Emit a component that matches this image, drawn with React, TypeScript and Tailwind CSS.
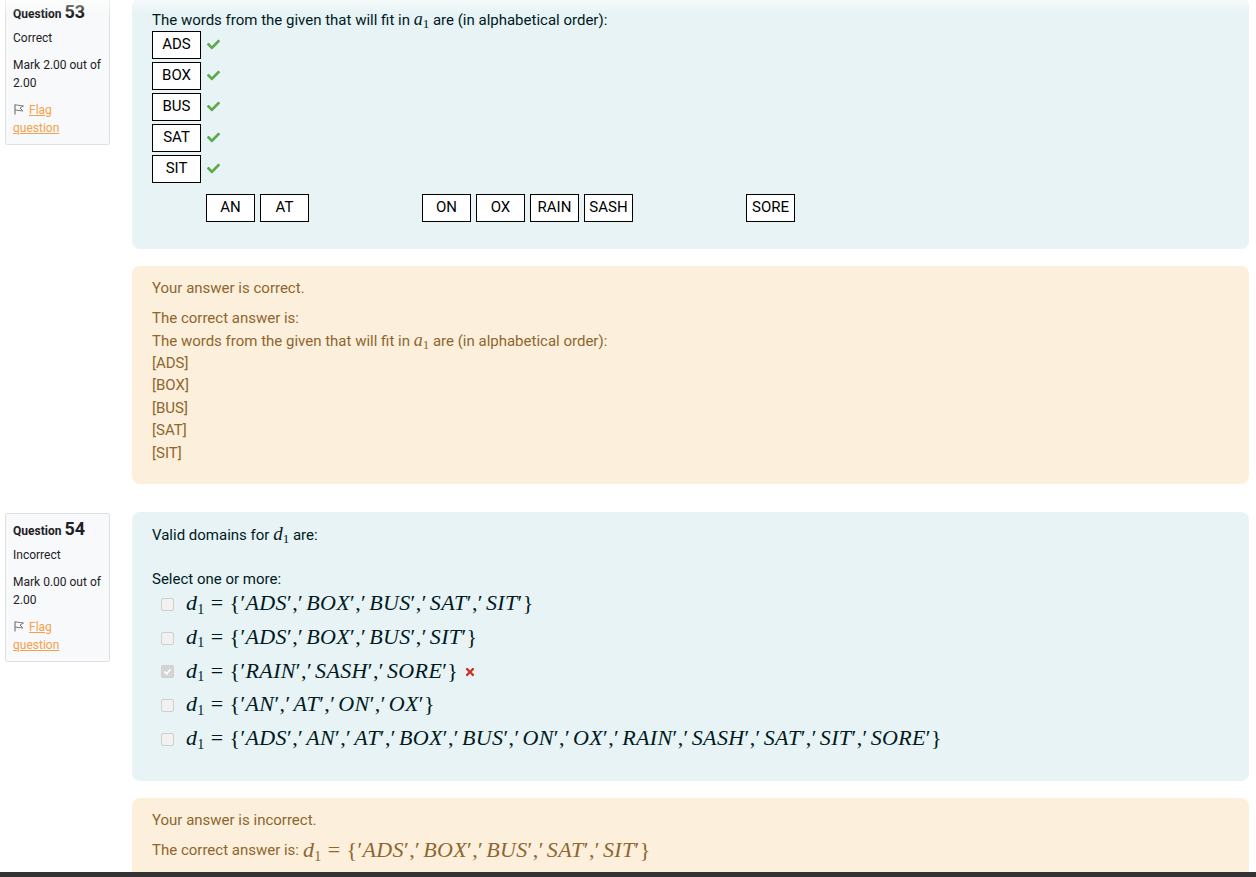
import { FaCheck, FaTimes } from "react-icons/fa";

const correctWords = ["ADS", "BOX", "BUS", "SAT", "SIT"];
// drag home order, null = slot already used
const homeWords: (string | null)[] = [null, "AN", "AT", null, null, "ON", "OX", "RAIN", "SASH", null, null, "SORE"];

const options = [
  { items: ["ADS", "BOX", "BUS", "SAT", "SIT"], checked: false },
  { items: ["ADS", "BOX", "BUS", "SIT"], checked: false },
  { items: ["RAIN", "SASH", "SORE"], checked: true, wrong: true },
  { items: ["AN", "AT", "ON", "OX"], checked: false },
  { items: ["ADS", "AN", "AT", "BOX", "BUS", "ON", "OX", "RAIN", "SASH", "SAT", "SIT", "SORE"], checked: false },
];

function FlagIcon() {
  return (
    <svg width="12" height="12" viewBox="0 0 12 12" className="inline-block mr-[4px] -mt-[3px] align-middle">
      <path d="M2 1.5 L2 11.5" stroke="#7a7a7a" strokeWidth="1.2" fill="none" />
      <path d="M2 1.8 L10.5 3 L7 5 L10 8 L2 7" stroke="#7a7a7a" strokeWidth="1" fill="none" strokeLinejoin="round" />
    </svg>
  );
}

function InfoBox({ no, state, mark }: { no: number; state: string; mark: string }) {
  return (
    <div className="w-[105px] shrink-0 self-start bg-[#f8f9fa] border border-[#dee2e6] rounded-[2px] px-[7px] pt-[6px] pb-[7px] text-[12px] leading-[18px] text-[#1d2125]">
      <div className="h-[20px] flex items-baseline whitespace-nowrap">
        <span className="font-bold">Question</span>
        <span className="font-bold text-[18px] ml-[3px]">{no}</span>
      </div>
      <div className="mt-[6px]">{state}</div>
      <div className="mt-[9px]">
        Mark {mark} out of
        <br />
        2.00
      </div>
      <div className="mt-[9px]">
        <FlagIcon />
        <span className="text-[#f7a04a] underline">Flag</span>
        <br />
        <span className="text-[#f7a04a] underline">question</span>
      </div>
    </div>
  );
}

function A1() {
  return (
    <span className="font-['Liberation_Serif',serif] text-[18px]">
      <i>a</i>
      <sub className="text-[13px]">1</sub>
    </span>
  );
}

function MathSet({ items }: { items: string[] }) {
  return (
    <span className="font-['Liberation_Serif',serif] text-[22px] whitespace-nowrap tracking-[0.35px]">
      <i>d</i>
      <sub className="text-[14px]">1</sub>
      <span className="mx-[6px]">=</span>
      {"{"}
      {items.map((it, i) => (
        <span key={i}>
          {i > 0 && <span>,</span>}
          <span>′</span>
          {i > 0 && <span className="mr-[3px]" />}
          <i>{it}</i>
          <span>′</span>
        </span>
      ))}
      {"}"}
    </span>
  );
}

function WordBox({ w }: { w: string }) {
  return (
    <div className="w-[49px] h-[28px] shrink-0 border border-black bg-white flex items-center justify-center text-[15px] text-black">
      {w}
    </div>
  );
}

function Checkbox({ checked }: { checked: boolean }) {
  return (
    <span
      className={`w-[13px] h-[13px] shrink-0 rounded-[2px] border flex items-center justify-center ${
        checked ? "bg-[#d4d4d4] border-[#d0d0d0]" : "bg-[#f1f1f1] border-[#cfcfcf]"
      }`}
    >
      {checked && (
        <svg width="9" height="9" viewBox="0 0 10 10">
          <path d="M1.5 5.2 L4 7.5 L8.5 2.5" stroke="white" strokeWidth="1.8" fill="none" />
        </svg>
      )}
    </span>
  );
}

export default function App() {
  return (
    <div className="relative h-[877px] overflow-hidden bg-white font-['Roboto',sans-serif]">
      <div className="-mt-[3px] pl-[5px] pr-[7px] flex flex-col gap-[28px]">
        {/* Question 53 */}
        <div className="flex gap-[22px]">
          <div className="-mt-[1px]">
            <InfoBox no={53} state="Correct" mark="2.00" />
          </div>
          <div className="flex-1 flex flex-col gap-[17px]">
            <div className="bg-[#e7f3f5] rounded-[8px] px-[20px] pt-[11px] pb-[27px] text-[15px] leading-[22.5px] text-[#001a1e]">
              <div className="h-[22.5px]">
                The words from the given that will fit in <A1 /> are (in alphabetical order):
              </div>
              <div className="flex flex-col gap-[3px]">
                {correctWords.map((w) => (
                  <div key={w} className="flex items-center gap-[6px]">
                    <WordBox w={w} />
                    <FaCheck className="text-[#5ea94a] w-[13px] h-[13px]" />
                  </div>
                ))}
              </div>
              <div className="flex gap-[5px] mt-[11px]">
                {homeWords.map((w, i) =>
                  w ? <WordBox key={i} w={w} /> : <div key={i} className="w-[49px] h-[28px] shrink-0" />
                )}
              </div>
            </div>
            <div className="bg-[#fcefdc] rounded-[8px] px-[20px] pt-[11px] pb-[20px] text-[15px] leading-[22.5px] text-[#8e662e]">
              <div>Your answer is correct.</div>
              <div className="mt-[7.5px]">The correct answer is:</div>
              <div className="h-[22.5px]">
                The words from the given that will fit in <A1 /> are (in alphabetical order):
              </div>
              {correctWords.map((w) => (
                <div key={w}>[{w}]</div>
              ))}
            </div>
          </div>
        </div>

        {/* Question 54 */}
        <div className="flex gap-[22px]">
          <div className="mt-[1px]">
            <InfoBox no={54} state="Incorrect" mark="0.00" />
          </div>
          <div className="flex-1 flex flex-col gap-[17px]">
            <div className="bg-[#e7f3f5] rounded-[8px] px-[20px] pt-[11px] pb-[25px] text-[15px] leading-[22.5px] text-[#001a1e]">
              <div className="h-[22.5px]">
                Valid domains for{" "}
                <span className="font-['Liberation_Serif',serif] text-[19px]">
                  <i>d</i>
                  <sub className="text-[13px]">1</sub>
                </span>{" "}
                are:
              </div>
              <div className="mt-[22.5px] h-[22.5px]">Select one or more:</div>
              <div className="flex flex-col -mt-[3px]">
                {options.map((o, i) => (
                  <div key={i} className="h-[33.75px] flex items-center pl-[9px]">
                    <Checkbox checked={o.checked} />
                    <span className="ml-[12px] text-[#001a1e]">
                      <MathSet items={o.items} />
                    </span>
                    {o.wrong && <FaTimes className="ml-[6px] text-[#ca3120] w-[12px] h-[12px]" />}
                  </div>
                ))}
              </div>
            </div>
            <div className="bg-[#fcefdc] rounded-t-[8px] px-[20px] pt-[11px] pb-[10px] text-[15px] leading-[22.5px] text-[#8e662e]">
              <div>Your answer is incorrect.</div>
              <div className="mt-[7.5px] h-[22.5px] flex items-center">
                <span className="mr-[4px]">The correct answer is:</span>
                <MathSet items={["ADS", "BOX", "BUS", "SAT", "SIT"]} />
              </div>
            </div>
          </div>
        </div>
      </div>
      <div className="h-[40px] bg-[#333333]" />
      <div className="absolute top-0 left-0 right-0 h-[14px] bg-gradient-to-b from-white/60 to-transparent pointer-events-none" />
    </div>
  );
}
